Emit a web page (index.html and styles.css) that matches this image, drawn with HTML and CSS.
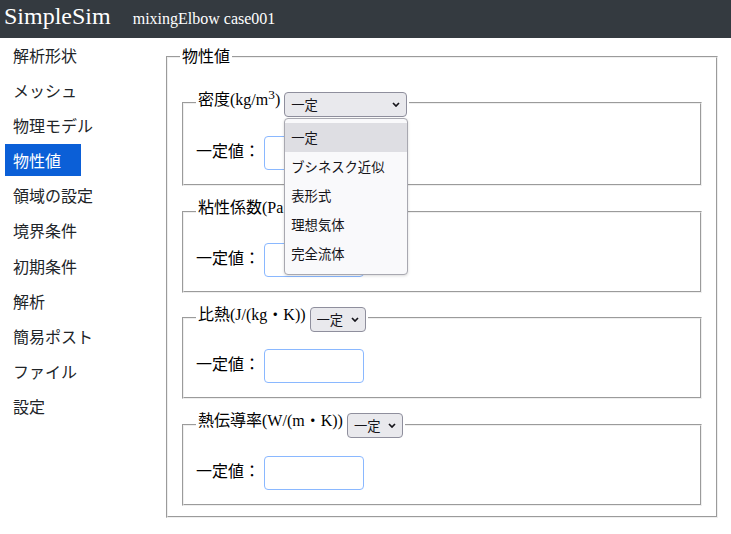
FILE: index.html
```html
<!DOCTYPE html>
<html lang="ja">
<head>
<meta charset="utf-8">
<title>SimpleSim</title>
<link rel="stylesheet" href="styles.css">
</head>
<body>
<header class="topbar">
  <span class="brand">SimpleSim</span>
  <span class="case-name">mixingElbow case001</span>
</header>
<div class="layout">
  <nav class="sidebar">
    <a class="nav-item">解析形状</a>
    <a class="nav-item">メッシュ</a>
    <a class="nav-item">物理モデル</a>
    <a class="nav-item active">物性値</a>
    <a class="nav-item">領域の設定</a>
    <a class="nav-item">境界条件</a>
    <a class="nav-item">初期条件</a>
    <a class="nav-item">解析</a>
    <a class="nav-item">簡易ポスト</a>
    <a class="nav-item">ファイル</a>
    <a class="nav-item">設定</a>
  </nav>
  <main class="content">
    <fieldset class="group">
      <legend class="group-title">物性値</legend>

      <fieldset class="prop first">
        <legend class="prop-title">密度(kg/m<sup>3</sup>) <span class="select-wrap"><select class="sel wide"><option>一定</option><option>ブシネスク近似</option><option>表形式</option><option>理想気体</option><option>完全流体</option></select><svg class="chev" width="8" height="5" viewBox="0 0 8 5"><polyline points="1,1 4,4 7,1" fill="none" stroke="#15141a" stroke-width="1.7"/></svg>
          <div class="dropdown">
            <div class="opt selected">一定</div>
            <div class="opt">ブシネスク近似</div>
            <div class="opt">表形式</div>
            <div class="opt">理想気体</div>
            <div class="opt">完全流体</div>
          </div>
        </span></legend>
        <div class="row"><label>一定値：</label> <input class="val" type="text"></div>
      </fieldset>

      <fieldset class="prop">
        <legend class="prop-title">粘性係数(Pa・s) <span class="select-wrap"><select class="sel"><option>一定</option></select><svg class="chev" width="8" height="5" viewBox="0 0 8 5"><polyline points="1,1 4,4 7,1" fill="none" stroke="#15141a" stroke-width="1.7"/></svg></span></legend>
        <div class="row"><label>一定値：</label> <input class="val" type="text"></div>
      </fieldset>

      <fieldset class="prop">
        <legend class="prop-title">比熱(J/(kg・K)) <span class="select-wrap"><select class="sel"><option>一定</option></select><svg class="chev" width="8" height="5" viewBox="0 0 8 5"><polyline points="1,1 4,4 7,1" fill="none" stroke="#15141a" stroke-width="1.7"/></svg></span></legend>
        <div class="row"><label>一定値：</label> <input class="val" type="text"></div>
      </fieldset>

      <fieldset class="prop">
        <legend class="prop-title">熱伝導率(W/(m・K)) <span class="select-wrap"><select class="sel"><option>一定</option></select><svg class="chev" width="8" height="5" viewBox="0 0 8 5"><polyline points="1,1 4,4 7,1" fill="none" stroke="#15141a" stroke-width="1.7"/></svg></span></legend>
        <div class="row"><label>一定値：</label> <input class="val" type="text"></div>
      </fieldset>
    </fieldset>
  </main>
</div>
</body>
</html>
```
FILE: styles.css
```css
html, body {
  margin: 0;
  padding: 0;
}
body {
  font-family: "Liberation Serif", "Noto Sans CJK JP", serif;
  font-size: 16px;
  color: #000;
  background: #fff;
}
.topbar {
  height: 38px;
  box-sizing: border-box;
  background: #343a40;
  color: #fff;
  display: flex;
  align-items: baseline;
  padding: 0 0 0 4px;
  line-height: 32px;
}
.brand {
  font-size: 24px;
}
.case-name {
  font-size: 16px;
  margin-left: 22px;
}
.layout {
  display: flex;
}
.sidebar {
  width: 164px;
  flex: none;
  display: flex;
  flex-direction: column;
  align-items: flex-start;
  gap: 3.1px;
  padding-top: 1px;
  font-family: "Noto Sans CJK JP", sans-serif;
}
.nav-item {
  display: block;
  margin-left: 5px;
  padding: 0 20px 0 8px;
  height: 32px;
  line-height: 32px;
  color: #212529;
  text-decoration: none;
}
.nav-item.active {
  background: #0b5fd7;
  color: #fff;
}
.content {
  flex: 1;
  padding: 9px 11px 0 0;
}
.group {
  margin: 0 2px;
  padding-bottom: 10px;
}
.group-title {
  line-height: 20px;
}
.prop {
  margin: 12px 2px 0;
  padding-bottom: 14px;
}
.prop.first {
  margin-top: 17px;
}
.prop.first .row {
  margin-top: 14px;
}
.prop-title {
  line-height: 20px;
}
.prop-title sup {
  line-height: 0;
}
.select-wrap {
  position: relative;
  display: inline-block;
  vertical-align: -5px;
}
.sel {
  appearance: none;
  -webkit-appearance: none;
  display: block;
  box-sizing: border-box;
  height: 25px;
  width: 56px;
  margin: 0;
  padding: 0 18px 0 6px;
  border: 1px solid #8f8f9d;
  border-radius: 4px;
  background: #e9e9ed;
  color: #15141a;
  font-family: "Noto Sans CJK JP", sans-serif;
  font-size: 13.33px;
  line-height: 23px;
}
.sel.wide {
  width: 123px;
}
.chev {
  position: absolute;
  right: 7px;
  top: 10px;
  pointer-events: none;
}
.dropdown {
  position: absolute;
  left: 0;
  top: 26px;
  width: 124px;
  box-sizing: border-box;
  padding: 4px 0 6px;
  background: #f9f9fb;
  border: 1px solid #a8a8b0;
  border-radius: 4px;
  box-shadow: 0 1px 3px rgba(0, 0, 0, 0.15);
  font-family: "Noto Sans CJK JP", sans-serif;
  font-size: 13.33px;
  color: #15141a;
  z-index: 10;
}
.opt {
  height: 29px;
  line-height: 29px;
  padding-left: 6px;
  white-space: nowrap;
}
.opt.selected {
  background: #dedee3;
}
.row {
  margin-top: 12px;
  font-family: "Noto Sans CJK JP", sans-serif;
}
.val {
  box-sizing: border-box;
  width: 100px;
  height: 34px;
  border: 1px solid #8ab8ff;
  border-radius: 4px;
  vertical-align: middle;
  padding: 0 6px;
  margin: 0;
}
```
